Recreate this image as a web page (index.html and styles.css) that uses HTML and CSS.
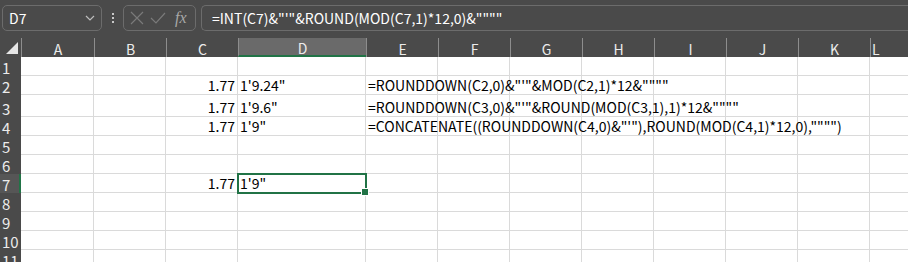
FILE: index.html
```html
<!DOCTYPE html>
<html>
<head>
<meta charset="utf-8">
<link rel="stylesheet" href="styles.css">
</head>
<body>
<div class="toolbar">
  <div class="namebox">
    <span class="ref">D7</span>
    <svg class="chev" width="10" height="6" viewBox="0 0 10 6"><path d="M1 1 L5 5 L9 1" fill="none" stroke="#bdbdbd" stroke-width="1.2"/></svg>
  </div>
  <div class="dots"><span></span><span></span><span></span></div>
  <div class="fxbox">
    <svg width="14" height="14" viewBox="0 0 14 14"><path d="M1 1 L13 13 M13 1 L1 13" stroke="#7a7a7a" stroke-width="1.2" fill="none"/></svg>
    <svg width="16" height="12" viewBox="0 0 16 12"><path d="M1 6 L6 11 L15 1" stroke="#7a7a7a" stroke-width="1.2" fill="none"/></svg>
    <span class="fx">fx</span>
  </div>
  <div class="formula">=INT(C7)&amp;"'"&amp;ROUND(MOD(C7,1)*12,0)&amp;""""</div>
</div>

<div class="sheet">
  <div class="hdr corner"><span class="tri"></span></div>
  <div class="hdr col">A</div>
  <div class="hdr col">B</div>
  <div class="hdr col">C</div>
  <div class="hdr col sel">D</div>
  <div class="hdr col">E</div>
  <div class="hdr col">F</div>
  <div class="hdr col">G</div>
  <div class="hdr col">H</div>
  <div class="hdr col">I</div>
  <div class="hdr col">J</div>
  <div class="hdr col">K</div>
  <div class="hdr col last">L</div>

  <div class="hdr row">1</div><div class="c"></div><div class="c"></div><div class="c"></div><div class="c"></div><div class="c"></div><div class="c"></div><div class="c"></div><div class="c"></div><div class="c"></div><div class="c"></div><div class="c"></div><div class="c"></div>

  <div class="hdr row">2</div><div class="c"></div><div class="c"></div><div class="c num">1.77</div><div class="c">1'9.24"</div><div class="c over">=ROUNDDOWN(C2,0)&amp;"'"&amp;MOD(C2,1)*12&amp;""""</div><div class="c"></div><div class="c"></div><div class="c"></div><div class="c"></div><div class="c"></div><div class="c"></div><div class="c"></div>

  <div class="hdr row tall">3</div><div class="c"></div><div class="c"></div><div class="c num">1.77</div><div class="c">1'9.6"</div><div class="c over">=ROUNDDOWN(C3,0)&amp;"'"&amp;ROUND(MOD(C3,1),1)*12&amp;""""</div><div class="c"></div><div class="c"></div><div class="c"></div><div class="c"></div><div class="c"></div><div class="c"></div><div class="c"></div>

  <div class="hdr row">4</div><div class="c"></div><div class="c"></div><div class="c num">1.77</div><div class="c">1'9"</div><div class="c over">=CONCATENATE((ROUNDDOWN(C4,0)&amp;"'"),ROUND(MOD(C4,1)*12,0),"""")</div><div class="c"></div><div class="c"></div><div class="c"></div><div class="c"></div><div class="c"></div><div class="c"></div><div class="c"></div>

  <div class="hdr row">5</div><div class="c"></div><div class="c"></div><div class="c"></div><div class="c"></div><div class="c"></div><div class="c"></div><div class="c"></div><div class="c"></div><div class="c"></div><div class="c"></div><div class="c"></div><div class="c"></div>

  <div class="hdr row">6</div><div class="c"></div><div class="c"></div><div class="c"></div><div class="c"></div><div class="c"></div><div class="c"></div><div class="c"></div><div class="c"></div><div class="c"></div><div class="c"></div><div class="c"></div><div class="c"></div>

  <div class="hdr row selrow">7</div><div class="c"></div><div class="c"></div><div class="c num">1.77</div><div class="c active">1'9"<span class="handle"></span></div><div class="c"></div><div class="c"></div><div class="c"></div><div class="c"></div><div class="c"></div><div class="c"></div><div class="c"></div><div class="c"></div>

  <div class="hdr row">8</div><div class="c"></div><div class="c"></div><div class="c"></div><div class="c"></div><div class="c"></div><div class="c"></div><div class="c"></div><div class="c"></div><div class="c"></div><div class="c"></div><div class="c"></div><div class="c"></div>

  <div class="hdr row">9</div><div class="c"></div><div class="c"></div><div class="c"></div><div class="c"></div><div class="c"></div><div class="c"></div><div class="c"></div><div class="c"></div><div class="c"></div><div class="c"></div><div class="c"></div><div class="c"></div>

  <div class="hdr row">10</div><div class="c"></div><div class="c"></div><div class="c"></div><div class="c"></div><div class="c"></div><div class="c"></div><div class="c"></div><div class="c"></div><div class="c"></div><div class="c"></div><div class="c"></div><div class="c"></div>

  <div class="hdr row">11</div><div class="c"></div><div class="c"></div><div class="c"></div><div class="c"></div><div class="c"></div><div class="c"></div><div class="c"></div><div class="c"></div><div class="c"></div><div class="c"></div><div class="c"></div><div class="c"></div>
</div>
</body>
</html>
```

FILE: styles.css
```css
html, body {
  margin: 0;
  padding: 0;
  background: #ffffff;
  overflow: hidden;
  width: 908px;
  height: 262px;
}
body {
  font-family: "Noto Sans CJK SC", "Liberation Sans", sans-serif;
}
.toolbar {
  height: 38px;
  background: #4a4a4a;
  display: flex;
  align-items: flex-start;
  padding-top: 5px;
  box-sizing: border-box;
}
.namebox {
  margin-left: 2px;
  width: 100px;
  height: 26px;
  box-sizing: border-box;
  border: 1px solid #6c6c6c;
  border-radius: 5px;
  display: flex;
  align-items: center;
  justify-content: space-between;
  padding: 0 6px 0 6px;
  color: #ffffff;
  font-size: 14px;
}
.dots {
  width: 21px;
  display: flex;
  flex-direction: column;
  align-items: center;
  gap: 2px;
  padding-top: 8px;
}
.dots span {
  width: 2px;
  height: 2px;
  background: #c8c8c8;
}
.fxbox {
  width: 73px;
  height: 26px;
  box-sizing: border-box;
  border: 1px solid #6c6c6c;
  border-radius: 5px;
  display: flex;
  align-items: center;
  gap: 6px;
  padding-left: 6px;
}
.fx {
  font-family: "Liberation Serif", serif;
  font-style: italic;
  color: #a8a8a8;
  font-size: 16px;
  margin-left: 3px;
}
.formula {
  margin-left: 5px;
  flex: 1;
  min-width: 0;
  height: 26px;
  box-sizing: border-box;
  border: 1px solid #6c6c6c;
  border-right: none;
  border-radius: 5px 0 0 5px;
  color: #ffffff;
  font-size: 14px;
  line-height: 24px;
  padding-left: 10px;
  white-space: nowrap;
}
.sheet {
  display: grid;
  grid-template-columns: 21px 73px 72px 72px 128px 72px 72px 72px 72px 72px 72px 72px 40px;
  grid-template-rows: 19px 19px 19px 22px 19px 19px 19px 19px 19px 19px 19px 19px;
  font-size: 14px;
}
.hdr {
  background: #4a4a4a;
  color: #ececec;
  box-sizing: border-box;
  display: flex;
  align-items: center;
  justify-content: center;
  font-size: 14px;
  line-height: 1;
}
.corner { position: relative; }
.tri {
  position: absolute;
  right: 3px;
  bottom: 3px;
  width: 0;
  height: 0;
  border-left: 12px solid transparent;
  border-bottom: 12px solid #e6e6e6;
}
.col {
  border-left: 1px solid #8d8d8d;
  padding-top: 2px;
}
.col.last {
  justify-content: flex-start;
  padding-left: 1px;
}
.col.sel {
  background: #6a6a6a;
  border-bottom: 2px solid #217346;
}
.row {
  font-size: 15px;
  padding-top: 2px;
  justify-content: flex-start;
  padding-left: 2px;
  white-space: nowrap;
}
.row.tall { align-items: flex-end; padding-bottom: 1px; }
.row.selrow {
  border-right: 2px solid #217346;
  background: #565656;
}
.c {
  box-sizing: border-box;
  border-right: 1px solid #dadada;
  border-bottom: 1px solid #dadada;
  color: #000;
  display: flex;
  align-items: flex-end;
  line-height: 17px;
  padding-left: 2px;
  white-space: nowrap;
}
.c.num {
  justify-content: flex-end;
  padding-right: 2px;
}
.c.over {
  overflow: visible;
  position: relative;
  z-index: 1;
}
.c.active {
  position: relative;
  outline: 2px solid #217346;
  outline-offset: -1px;
  z-index: 2;
}
.handle {
  position: absolute;
  right: -4px;
  bottom: -4px;
  width: 6px;
  height: 6px;
  background: #217346;
  border: 1px solid #ffffff;
}
```
